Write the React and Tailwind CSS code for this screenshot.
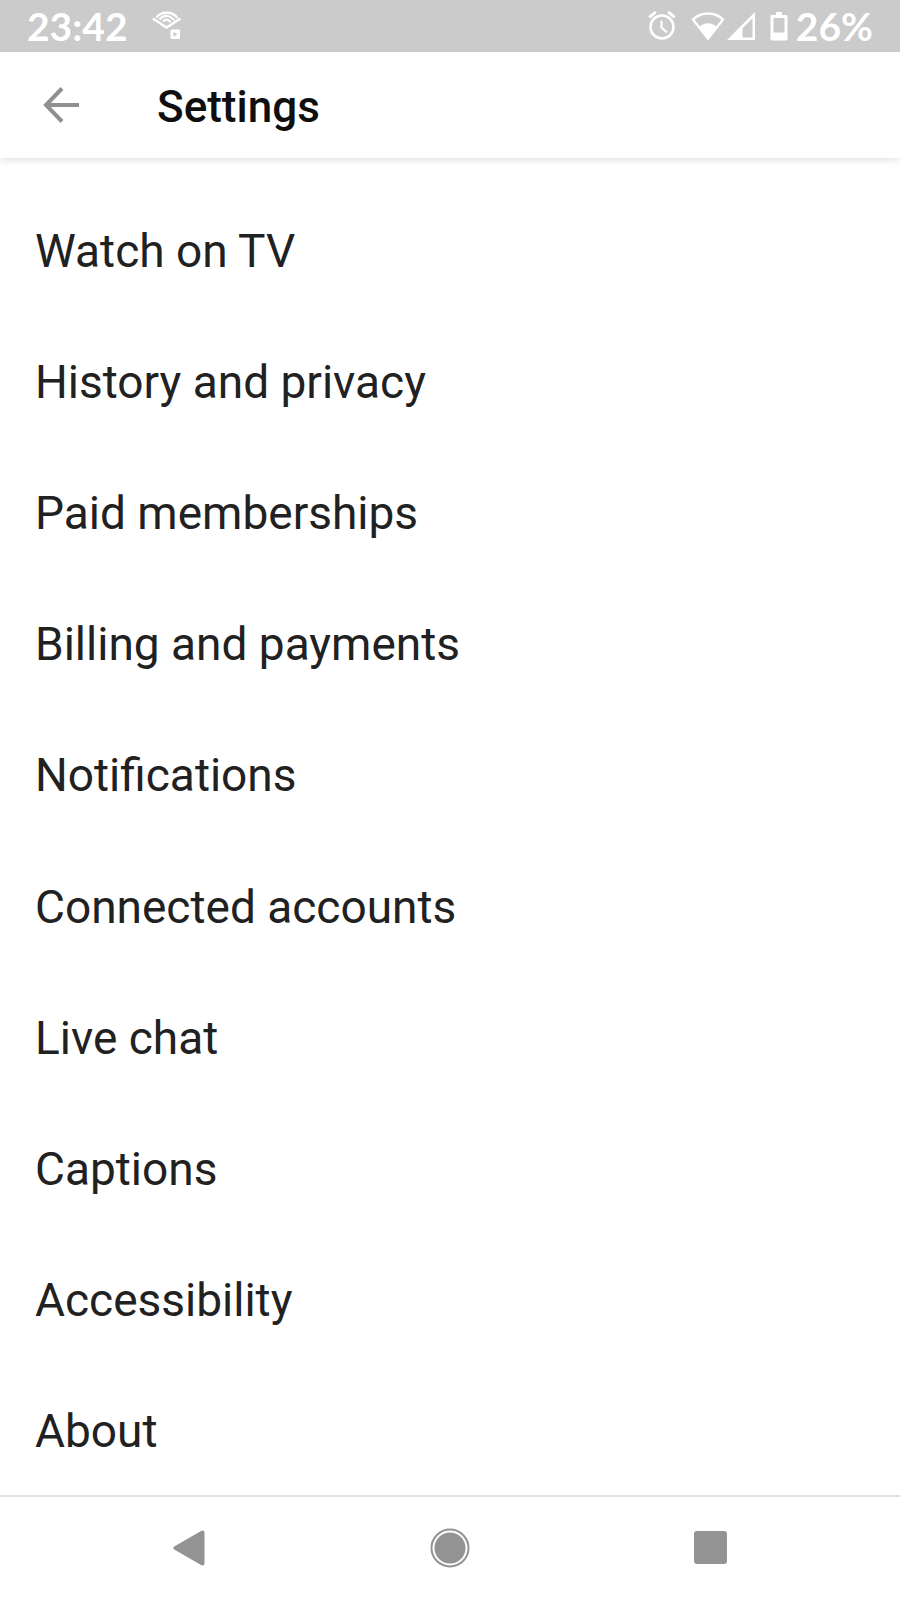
import React from 'react';

const items = [
  'Watch on TV',
  'History and privacy',
  'Paid memberships',
  'Billing and payments',
  'Notifications',
  'Connected accounts',
  'Live chat',
  'Captions',
  'Accessibility',
  'About',
];

const CastIcon = () => (
  <svg width="30" height="30" viewBox="0 0 30 30" fill="none" stroke="currentColor" aria-hidden="true">
    <path d="M0.800 7.500 L14.500 16.500 L28.500 7.500" strokeWidth="2.600" />
    <path d="M4.500 6.500 C9 0.300 20.500 0 25.500 7" strokeWidth="2.400" />
    <path d="M7.500 8.500 C12 3.300 18.500 4 22 9.500" strokeWidth="2.200" />
    <path d="M11 10.500 C13.500 7.800 16.500 8 18.500 11.500" strokeWidth="2.200" />
    <path d="M19.500 18.500h7.500a1 1 0 0 1 1 1v7.500a1 1 0 0 1-1 1h-7.500a1 1 0 0 1-1-1v-7.500a1 1 0 0 1 1-1z M21.500 20.700v5l4-2.500z" fill="currentColor" fillRule="evenodd" stroke="none" />
  </svg>
);

const AlarmIcon = () => (
  <svg width="28" height="30" viewBox="0 0 28 30" fill="none" stroke="currentColor" aria-hidden="true">
    <circle cx="14" cy="16" r="11.500" strokeWidth="2.600" />
    <path d="M13.500 9.500v7l5.500 5" strokeWidth="2.200" />
    <path d="M1.200 6.300 L7.800 1 M20.200 1 L26.800 6.300" strokeWidth="2.800" />
  </svg>
);

const WifiIcon = () => (
  <svg width="34" height="30" viewBox="0 0 34 30" aria-hidden="true">
    <path d="M2 8.500 C10 0.500 24 0.500 32 8.500 L17 27.500 Z" fill="none" stroke="currentColor" strokeWidth="2.400" />
    <path d="M8.500 16 C13 11 21 11 25.500 16 L17 28 Z" fill="currentColor" />
  </svg>
);

const SignalIcon = () => (
  <svg width="28" height="30" viewBox="0 0 28 30" aria-hidden="true">
    <path d="M28 1v28H0z M25.500 7.200L15.500 17.200V26.500h10z" fill="currentColor" fillRule="evenodd" />
  </svg>
);

const BatteryIcon = () => (
  <svg width="18" height="30" viewBox="0 0 18 30" aria-hidden="true">
    <path d="M6 1h6v3h4.500a1 1 0 0 1 1 1v23a1.500 1.500 0 0 1-1.500 1.500H2a1.500 1.500 0 0 1-1.500-1.500V5a1 1 0 0 1 1-1H6z M3.500 7v14.500h11V7z" fill="currentColor" fillRule="evenodd" />
  </svg>
);

const StatusBar = () => (
  <div className="z-10 flex h-[52px] shrink-0 items-center justify-between bg-[#cbcbcb] px-[27px] font-['Lato',sans-serif] text-[39px] font-bold leading-[52px] text-white">
    <div className="flex items-center gap-6">
      <span>23:42</span>
      <CastIcon />
    </div>
    <div className="flex items-center">
      <AlarmIcon />
      <span className="ml-[15px] flex items-center gap-[2px]">
        <WifiIcon />
        <SignalIcon />
      </span>
      <span className="ml-[15px] flex items-center gap-2">
        <BatteryIcon />
        <span>26%</span>
      </span>
    </div>
  </div>
);

const Header = () => (
  <header className="flex h-[106px] shrink-0 items-center bg-white px-[43px] shadow-[0_2px_8px_rgba(0,0,0,0.12)]">
    <button type="button" aria-label="Back" className="text-[#909090]">
      <svg width="36" height="36" viewBox="0 0 36 36" fill="none" stroke="currentColor" strokeWidth="4">
        <path d="M19 1.500 L3 18 L19 34.500 M3 18 H36" />
      </svg>
    </button>
    <h1 className="ml-[78px] pt-1 text-[44px] font-medium leading-[52px] text-[#0f0f0f]">Settings</h1>
  </header>
);

const NavBar = () => (
  <nav aria-label="System" className="grid h-[105px] shrink-0 grid-cols-3 border-t-2 border-[#e0e0e0] px-[59px] pb-[2px] text-[#939393]">
    <button type="button" aria-label="Back" className="flex items-center justify-center">
      <svg width="32" height="36" viewBox="0 0 32 36" fill="currentColor">
        <path d="M1.200 16.500 L28.500 0.800 Q31.500 0 31.500 2.800 V33.200 Q31.500 36 28.500 35.200 L1.200 19.500 Q-0.500 18 1.200 16.500z" />
      </svg>
    </button>
    <button type="button" aria-label="Home" className="flex items-center justify-center">
      <svg width="40" height="40" viewBox="0 0 40 40">
        <circle cx="20" cy="20" r="18.500" fill="none" stroke="currentColor" strokeWidth="2" />
        <circle cx="20" cy="20" r="15.500" fill="currentColor" />
      </svg>
    </button>
    <button type="button" aria-label="Recent apps" className="flex items-center justify-center">
      <span className="size-[33px] rounded-[3px] bg-[#939393]" />
    </button>
  </nav>
);

const App = () => (
  <div className="flex min-h-screen flex-col bg-white font-['Roboto',sans-serif]">
    <StatusBar />
    <Header />
    <main className="flex flex-1 flex-col pt-[25px]">
      <ul className="flex flex-1 flex-col">
        {items.map((item) => (
          <li key={item} className="flex flex-1">
            <a href="#" className="flex flex-1 items-center px-[35px] pt-1 text-[46px] leading-[56px] text-[#212121]">
              {item}
            </a>
          </li>
        ))}
      </ul>
    </main>
    <NavBar />
  </div>
);

export default App;
